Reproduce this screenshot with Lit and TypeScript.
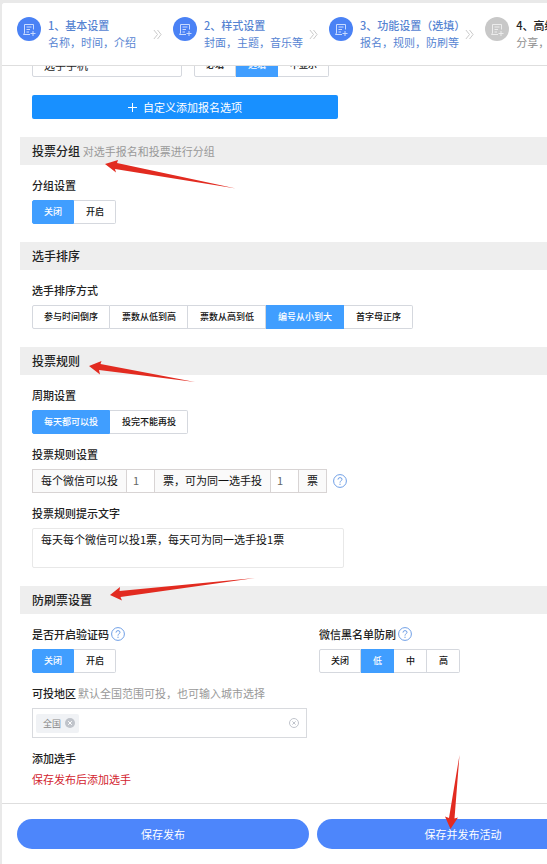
import { LitElement, html, css, svg } from "lit";
import { customElement, property, state } from "lit/decorators.js";

const sheetIcon = svg`
  <path d="M16.5 12.5V7.5H7.5V16L6.5 17.5H13" />
  <path d="M9.5 10H14.5M9.5 12.5H13M9.5 15H12" />
  <path d="M16 14V19M13.5 16.5H18.5" />
`;

@customElement("step-item")
class StepItem extends LitElement {
  @property() heading = "";
  @property() detail = "";
  @property({ type: Boolean }) done = false;
  @property({ type: Boolean }) last = false;

  static styles = css`
    :host {
      flex: 0 0 156px;
      display: flex;
      align-items: flex-start;
    }
    .badge {
      flex: none;
      width: 24px;
      height: 24px;
      border-radius: 50%;
      background: #c8c8c8;
      fill: none;
      stroke: #ececec;
      stroke-width: 1;
    }
    .badge.done {
      background: #4a82f5;
      stroke: #c9dbff;
    }
    .words {
      margin-left: 7px;
      white-space: nowrap;
      line-height: 17px;
      color: #8f8f8f;
    }
    .heading {
      font-weight: 500;
      color: #222;
    }
    .done .heading,
    .words.done {
      color: #5684d2;
    }
    .chevron {
      flex: none;
      width: 9px;
      height: 11px;
      margin: 12px 11px 0 auto;
      fill: none;
      stroke: #c4c4c4;
    }
  `;

  render() {
    const tone = this.done ? "done" : "";
    return html`
      <svg class="badge ${tone}" viewBox="0 0 24 24">${sheetIcon}</svg>
      <div class="words ${tone}">
        <div class="heading">${this.heading}</div>
        <div>${this.detail}</div>
      </div>
      ${this.last
        ? ""
        : html`<svg class="chevron" viewBox="0 0 10 12">
            <path d="M1 1L5 6L1 11M5 1L9 6L5 11" />
          </svg>`}
    `;
  }
}

@customElement("option-group")
class OptionGroup extends LitElement {
  @property() label = "";
  @property({ type: Array }) options: string[] = [];
  @property({ type: Number }) selected = 0;

  static styles = css`
    :host {
      display: flex;
    }
    .group {
      display: flex;
    }
    .option {
      position: relative;
      box-sizing: border-box;
      height: 24px;
      padding: 0 11px 0 12px;
      border: 1px solid #d5d8de;
      border-left-width: 0;
      font-size: 9px;
      line-height: 22px;
      font-weight: 500;
      color: #111;
      background: #fff;
      white-space: nowrap;
      cursor: pointer;
    }
    .option:first-child {
      padding-left: 11px;
      border-left-width: 1px;
      border-radius: 2px 0 0 2px;
    }
    .option:last-child {
      border-radius: 0 2px 2px 0;
    }
    .option.on {
      background: #409eff;
      border-color: #409eff;
      color: #fff;
    }
    input {
      position: absolute;
      inset: 0;
      margin: 0;
      appearance: none;
      cursor: pointer;
    }
  `;

  render() {
    return html`<div class="group" role="radiogroup" aria-label=${this.label}>
      ${this.options.map(
        (text, i) => html`<label class="option ${i === this.selected ? "on" : ""}">
          <input
            type="radio"
            name="choice"
            .checked=${i === this.selected}
            @change=${() => (this.selected = i)}
          />${text}</label>`
      )}
    </div>`;
  }
}

@customElement("help-button")
class HelpButton extends LitElement {
  static styles = css`
    :host {
      display: flex;
    }
    button {
      display: flex;
      padding: 0;
      border: 0;
      background: none;
      cursor: pointer;
    }
    svg {
      width: 14px;
      height: 14px;
      fill: none;
      stroke: #6f9fe6;
      stroke-width: 1;
    }
  `;

  render() {
    return html`<button aria-label="帮助">
      <svg viewBox="0 0 14 14">
        <circle cx="7" cy="7" r="6.4" />
        <path d="M5 5.6Q5 3.6 7 3.6Q9 3.6 9 5.3Q9 6.3 7.8 7Q7 7.4 7 8.6M7 9.7V11" />
      </svg>
    </button>`;
  }
}

@customElement("app-root")
class AppRoot extends LitElement {
  @state() private regions = ["全国"];

  static styles = css`
    :host {
      display: block;
      position: relative;
      overflow: hidden;
      padding: 3px 0 0 2px;
      background: #e9e9e9;
      font-family: "Noto Sans CJK SC", "Noto Sans", sans-serif;
      font-size: 11px;
      color: #222;
    }
    * {
      box-sizing: border-box;
    }
    input,
    textarea,
    button {
      font: inherit;
      color: inherit;
    }
    .panel {
      background: #fff;
      border-radius: 3px 0 0 0;
    }
    .steps {
      position: relative;
      z-index: 1;
      display: flex;
      height: 63px;
      padding: 14px 0 0 15px;
      overflow: hidden;
      border-bottom: 1px solid #dedede;
      border-radius: 3px 0 0 0;
      background: #fff;
    }
    .body {
      margin-top: -13px;
      padding: 0 0 14px 18px;
    }
    .block {
      padding-left: 12px;
    }
    .field-row {
      display: flex;
      gap: 12px;
    }
    .name-input {
      width: 150px;
      height: 24px;
      padding: 0 11px;
      border: 1px solid #d5d8de;
      border-radius: 2px;
      font-size: 11px;
    }
    .add {
      display: flex;
      align-items: center;
      justify-content: center;
      gap: 6px;
      width: 306px;
      height: 24px;
      margin-top: 18px;
      padding: 0;
      border: 0;
      border-radius: 2px;
      background: #1890ff;
      color: #fff;
    }
    .add svg {
      width: 9px;
      height: 9px;
      stroke: #fff;
    }
    .section {
      height: 28px;
      margin: 18px 0 0;
      padding-left: 12px;
      background: #eee;
      font-size: 12px;
      line-height: 28px;
      font-weight: 500;
    }
    .note {
      font-size: 11px;
      font-weight: 400;
      color: #999;
    }
    .caption {
      display: flex;
      align-items: center;
      gap: 2px;
      height: 22px;
      margin: 9px 0 4px;
      font-weight: 500;
    }
    .rule {
      display: flex;
      align-items: center;
      gap: 6px;
    }
    .rule-parts {
      display: flex;
      height: 24px;
      border: 1px solid #d8d4d4;
      line-height: 21px;
    }
    .rule-text {
      padding: 0 8px;
      background: #fafafa;
      color: #111;
    }
    .rule-input {
      width: 29px;
      padding: 0 6px 2px;
      border: 0 solid #d8d4d4;
      border-width: 0 1px;
      border-radius: 0;
      background: #fff;
      color: #666;
    }
    .hint {
      display: block;
      width: 312px;
      height: 40px;
      padding: 2px 8px;
      border: 1px solid #e8e8e8;
      border-radius: 2px;
      line-height: 17px;
      resize: none;
      color: #111;
    }
    .pair {
      display: grid;
      grid-template-columns: 287px 1fr;
    }
    .region {
      display: flex;
      align-items: center;
      gap: 4px;
      width: 275px;
      height: 30px;
      padding: 0 7px 0 3px;
      border: 1px solid #d8dade;
    }
    .tag {
      display: flex;
      align-items: center;
      gap: 4px;
      height: 19px;
      padding: 0 4px 0 7px;
      border-radius: 2px;
      background: #f0f2f5;
      font-size: 9px;
      color: #888;
    }
    .icon-button {
      display: flex;
      padding: 0;
      border: 0;
      background: none;
      cursor: pointer;
    }
    .icon-button svg {
      width: 10px;
      height: 10px;
      fill: none;
    }
    .remove svg {
      fill: #bfc3ca;
      stroke: #fff;
    }
    .clear svg {
      stroke: #c0c4cc;
    }
    .region-input {
      flex: 1;
      min-width: 0;
      padding: 0;
      border: 0;
      outline: 0;
    }
    .caption + .warning {
      margin-top: -4px;
    }
    .warning {
      line-height: 20px;
      color: #d2232e;
    }
    .footer {
      display: flex;
      gap: 8px;
      padding: 15px 0 15px 15px;
      overflow: hidden;
      border-top: 1px solid #dedede;
    }
    .save {
      flex: 0 0 292px;
      height: 30px;
      padding: 0;
      border: 0;
      border-radius: 15px;
      background: #4d86fb;
      color: #fff;
    }
    .arrows {
      position: absolute;
      z-index: 2;
      top: 0;
      left: 0;
      width: 547px;
      height: 864px;
      pointer-events: none;
      fill: #e22b20;
    }
  `;

  render() {
    return html`
      <div class="panel">
        <header class="steps">
          <step-item done heading="1、基本设置" detail="名称，时间，介绍"></step-item>
          <step-item done heading="2、样式设置" detail="封面，主题，音乐等"></step-item>
          <step-item done heading="3、功能设置（选填）" detail="报名，规则，防刷等"></step-item>
          <step-item last heading="4、高级" detail="分享，"></step-item>
        </header>

        <main class="body">
          <div class="block">
            <div class="field-row">
              <input class="name-input" aria-label="报名选项" value="选手手机" />
              <option-group label="填写要求" .options=${["必填", "选填", "不显示"]} .selected=${1}></option-group>
            </div>
            <button class="add">
              <svg viewBox="0 0 9 9"><path d="M4.5 0V9M0 4.5H9" /></svg>自定义添加报名选项
            </button>
          </div>

          <h2 class="section">投票分组 <span class="note">对选手报名和投票进行分组</span></h2>
          <div class="block">
            <div class="caption">分组设置</div>
            <option-group label="分组设置" .options=${["关闭", "开启"]}></option-group>
          </div>

          <h2 class="section">选手排序</h2>
          <div class="block">
            <div class="caption">选手排序方式</div>
            <option-group
              label="选手排序方式"
              .options=${["参与时间倒序", "票数从低到高", "票数从高到低", "编号从小到大", "首字母正序"]}
              .selected=${3}
            ></option-group>
          </div>

          <h2 class="section">投票规则</h2>
          <div class="block">
            <div class="caption">周期设置</div>
            <option-group label="周期设置" .options=${["每天都可以投", "投完不能再投"]}></option-group>
            <div class="caption">投票规则设置</div>
            <div class="rule">
              <div class="rule-parts">
                <label class="rule-text" for="per-user">每个微信可以投</label>
                <input class="rule-input" id="per-user" value="1" />
                <label class="rule-text" for="per-player">票，可为同一选手投</label>
                <input class="rule-input" id="per-player" value="1" />
                <span class="rule-text">票</span>
              </div>
              <help-button></help-button>
            </div>
            <label class="caption" for="hint">投票规则提示文字</label>
            <textarea class="hint" id="hint" .value=${"每天每个微信可以投1票，每天可为同一选手投1票"}></textarea>
          </div>

          <h2 class="section">防刷票设置</h2>
          <div class="block">
            <div class="pair">
              <div>
                <div class="caption">是否开启验证码 <help-button></help-button></div>
                <option-group label="是否开启验证码" .options=${["关闭", "开启"]}></option-group>
              </div>
              <div>
                <div class="caption">微信黑名单防刷 <help-button></help-button></div>
                <option-group
                  label="微信黑名单防刷"
                  .options=${["关闭", "低", "中", "高"]}
                  .selected=${1}
                ></option-group>
              </div>
            </div>
            <label class="caption" for="region">可投地区 <span class="note">默认全国范围可投，也可输入城市选择</span></label>
            <div class="region">
              ${this.regions.map(
                (name) => html`<span class="tag"
                  >${name}<button
                    class="icon-button remove"
                    aria-label="移除"
                    @click=${() => (this.regions = this.regions.filter((r) => r !== name))}
                  >
                    <svg viewBox="0 0 10 10">
                      <circle cx="5" cy="5" r="5" stroke="none" />
                      <path d="M3.2 3.2L6.8 6.8M6.8 3.2L3.2 6.8" />
                    </svg></button
                ></span>`
              )}
              <input class="region-input" id="region" />
              <button class="icon-button clear" aria-label="清空" @click=${() => (this.regions = [])}>
                <svg viewBox="0 0 10 10">
                  <circle cx="5" cy="5" r="4.5" />
                  <path d="M3.4 3.4L6.6 6.6M6.6 3.4L3.4 6.6" />
                </svg>
              </button>
            </div>
            <div class="caption">添加选手</div>
            <div class="warning">保存发布后添加选手</div>
          </div>
        </main>

        <footer class="footer">
          <button class="save">保存发布</button>
          <button class="save">保存并发布活动</button>
        </footer>
      </div>

      <svg class="arrows" viewBox="0 0 547 864" aria-hidden="true">
        <path d="M105 164L118 160L117 163L236 188.5L115 169L116 172.5Z" />
        <path d="M89 366L101.5 361L100.5 364L195 382L99 370L100 374.5Z" />
        <path d="M110 595L120 587L119.5 591L255 578L120.5 597L122 600.5Z" />
        <path d="M450.5 829L458 817.5L454.5 818.5L459.5 755L449 818L445 816.5Z" />
      </svg>
    `;
  }
}
